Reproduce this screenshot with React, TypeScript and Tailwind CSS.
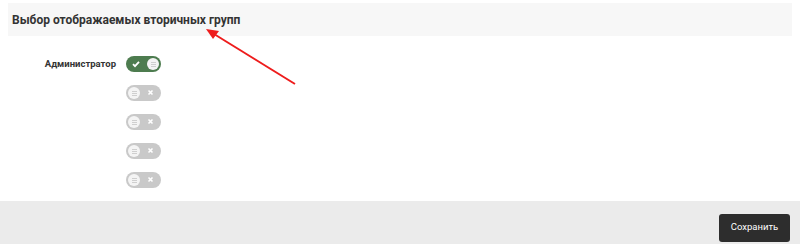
import React from "react";

interface ToggleProps {
  on?: boolean;
}

const Toggle = ({ on = false }: ToggleProps) => (
  <div
    className={`flex h-[16px] w-[35px] items-center justify-between rounded-full px-[2px] ${
      on ? "bg-[#4d7c4f]" : "bg-[#c9c9c9]"
    }`}
  >
    {on ? (
      <>
        <svg width="14" height="12" viewBox="0 0 14 12" className="ml-[1px]">
          <path d="M4 6.2 L6 8.2 L10 3.8" stroke="#fff" strokeWidth="1.8" fill="none" />
        </svg>
        <Knob />
      </>
    ) : (
      <>
        <Knob />
        <svg width="14" height="12" viewBox="0 0 14 12" className="mr-[1px]">
          <path d="M4.5 3.5 L8.5 7.5 M8.5 3.5 L4.5 7.5" stroke="#fff" strokeWidth="1.6" />
        </svg>
      </>
    )}
  </div>
);

const Knob = () => (
  <div className="flex h-[12px] w-[12px] flex-col items-center justify-center gap-[1px] rounded-full bg-[#f4f4f4]">
    <span className="h-px w-[5px] bg-[#cfcfcf]" />
    <span className="h-px w-[5px] bg-[#cfcfcf]" />
    <span className="h-px w-[5px] bg-[#cfcfcf]" />
  </div>
);

export default function App() {
  return (
    <div
      className="relative flex h-[244px] w-[800px] flex-col bg-white text-[#333]"
      style={{ fontFamily: "Roboto, 'Liberation Sans', sans-serif" }}
    >
      {/* Header */}
      <div className="mx-[8px] mt-[3px] flex h-[33px] items-center bg-[#f7f7f7] pl-[4px]">
        <h2 className="text-[12px] font-bold text-[#333]">Выбор отображаемых вторичных групп</h2>
      </div>

      {/* Toggles */}
      <div className="flex flex-1 flex-col gap-[13px] pt-[20px]">
        {["Администратор", "", "", "", ""].map((label, i) => (
          <div key={i} className="flex items-center">
            <span className="w-[117px] pr-[1px] text-right text-[9.5px] font-bold text-[#333]">
              {label}
            </span>
            <div className="ml-[9px]">
              <Toggle on={i === 0} />
            </div>
          </div>
        ))}
      </div>

      {/* Footer */}
      <div className="flex h-[43px] items-center justify-end bg-[#ebebeb] pr-[10px]">
        <button className="mt-[10px] h-[28px] w-[71px] rounded-[3px] bg-[#2d2d2d] text-[9.5px] text-white">
          Сохранить
        </button>
      </div>

      {/* Annotation arrow */}
      <svg className="absolute left-0 top-0" width="800" height="244" viewBox="0 0 800 244">
        <line x1="295" y1="84" x2="214" y2="34" stroke="#ee1c1c" strokeWidth="2" />
        <polygon points="206,29 219,31 213,39" fill="#ee1c1c" />
      </svg>
    </div>
  );
}
